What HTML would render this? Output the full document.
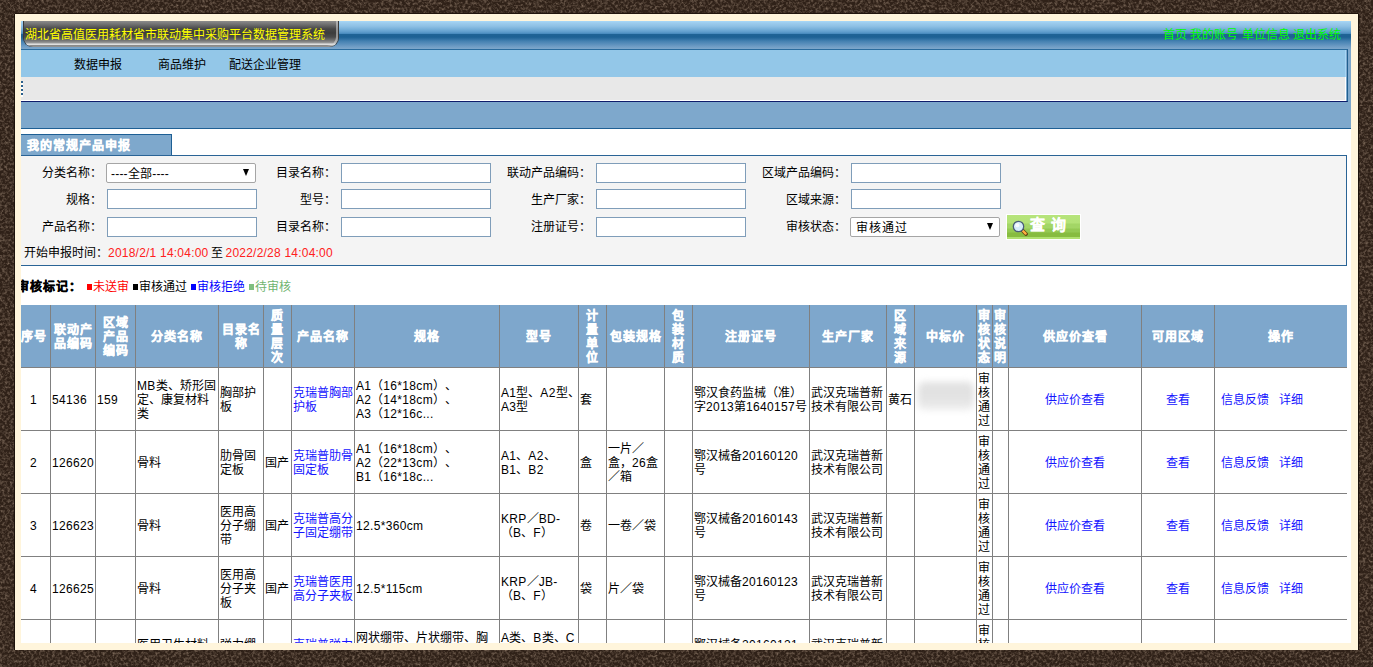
<!DOCTYPE html>
<html lang="zh-CN"><head><meta charset="utf-8">
<style>
*{box-sizing:border-box}
html,body{margin:0;padding:0}
body{text-spacing-trim:space-all;width:1373px;height:667px;overflow:hidden;position:relative;background:#3e3229;font-family:"Liberation Sans",sans-serif;font-size:12px;color:#000}
.abs{position:absolute}
#tex{position:absolute;left:0;top:0}
#cream{position:absolute;left:15px;top:14px;width:1343px;height:636px;background:#fff5dc;box-shadow:1px 0 0 #1c120b,-1px 0 0 #1c120b,0 -1px 0 #21150d}
#main{position:absolute;left:21px;top:21px;width:1330px;height:622px;background:#fff;overflow:hidden}
#hdr{position:absolute;left:0;top:0;width:1330px;height:28px;background:linear-gradient(to bottom,#a8d8f8 0px,#9ccced 2px,#8fc1e5 5px,#78b1da 8px,#5f9dcc 11px,#4a8cbf 12.5px,#1f6395 13.5px,#1d6194 16px,#2e6fa1 18px,#4380b0 20px,#5a8fbc 23px,#739fc6 26px,#7da7cb 28px)}
#tab{position:absolute;left:3px;top:0;width:314px;height:26px;border-radius:0 0 9px 9px;
background:linear-gradient(to bottom,#8c8c8c 0px,#6a6a6a 4px,#464646 8px,#3c3c3c 12px,#4a4a4a 16px,#7a7a7a 20px,#9a9a9a 22px,#e6e6e6 23px,#d8d8d8 24px,#3a3a3a 25px);
box-shadow:-1px 0 0 #3a3a3a,1px 0 0 #3a3a3a,inset -2px -1px 0 rgba(215,215,215,.55)}
#title{position:absolute;left:1px;top:7px;color:#ffff00;white-space:nowrap;line-height:14px}
#links{position:absolute;left:1142px;top:7px;color:#00ff00;white-space:nowrap;line-height:14px}
#mid{position:absolute;left:0;top:28px;width:1330px;height:80px;background:#7ea8cc;border-bottom:1px solid #1e5f94}
#menu{position:absolute;left:-4px;top:28px;width:1331px;height:53px;border-top:1px solid #2b6c9e;border-right:1px solid #1f5f8f;border-bottom:1px solid #0f1d6b}
#menu .lb{position:absolute;left:0;top:0;width:1329px;height:27px;background:#93c7e8;border-right:1px solid #a6d6f6}
#menu .gr{position:absolute;left:0;top:27px;width:1329px;height:24px;background:#e8e8e8;border-right:1px solid #fff;border-bottom:1px solid #fff}
.mi{position:absolute;top:8px;line-height:14px;white-space:nowrap}
#body{position:absolute;left:-4px;top:108px;width:1330px;height:520px}
#ftab{position:absolute;left:0;top:5px;width:155px;height:22px;background:#7ea8cc;border:1px solid #1e5f94;border-bottom:none;color:#fff;font-weight:bold;letter-spacing:1px;line-height:14px;padding:4px 0 0 9px}
#form{position:absolute;left:0;top:26px;width:1330px;height:111px;background:#f4f4f4;border:1px solid #2a6496}
.lbl{position:absolute;line-height:14px;white-space:nowrap;text-align:right}
.inp{position:absolute;width:150px;height:20px;background:#fff;border:1px solid #7f9db9}
.sel{position:absolute;width:150px;height:20px;background:#fff;border:1px solid #a5a5a5;border-radius:2px;line-height:14px;padding:2px 0 0 4px}
.sel .arr{position:absolute;right:6px;top:5px;width:0;height:0;border-left:3.5px solid transparent;border-right:3.5px solid transparent;border-top:7px solid #000}
#btn{position:absolute;left:988px;top:58px;width:75px;height:26px;border:1px solid #fff;background:linear-gradient(to bottom,#b6e47b 0,#b3e277 8px,#a3d666 9px,#a3d666 13px,#94c953 14px,#94c953 17px,#87bc40 18px,#87bc40 22px,#b0e070 22px)}
#btn .bt{position:absolute;left:23px;top:2px;-webkit-text-stroke:.2px #fff;color:#fff;font-weight:bold;font-size:15px;line-height:16px;letter-spacing:1px;white-space:nowrap}
#mark{position:absolute;left:0;top:151px;line-height:14px;white-space:nowrap}
#mark b{letter-spacing:1px}
.sq{display:inline-block;width:5px;height:6px;margin-right:1px;vertical-align:1px}
#tbl{position:absolute;left:0;top:176px;width:1330px;table-layout:fixed;border-collapse:separate;border-spacing:0}
#tbl th,#tbl td{border-right:1px solid #808080;border-bottom:1px solid #808080;padding:2px 0 0 1px;line-height:14px;vertical-align:middle;white-space:nowrap;overflow:hidden}
#tbl th{background:#7ea7cc;color:#fff;font-weight:bold;letter-spacing:1px;height:63px;text-align:center;padding:2px 0 0 0}
#tbl td{height:63px;text-align:left}
#tbl td.c{text-align:center;padding:2px 0 0 0}
#tbl td.op{padding-left:6px}
#tbl th:last-child,#tbl td:last-child{border-right:none}
#tbl a{color:#1414ff;text-decoration:none}
.blur{width:56px;height:28px;margin:-8px 0 0 2px;background:linear-gradient(to bottom,#e0e0e0 0,#e3e3e3 60%,#eeeeee 100%);filter:blur(3.5px);border-radius:6px}
.n{letter-spacing:.33px}
#ftab,#tbl th,#mark b{-webkit-text-stroke:.35px currentColor}
</style></head><body>
<svg id="tex" width="1373" height="667">
<filter id="nz" x="0" y="0" width="100%" height="100%"><feTurbulence type="fractalNoise" baseFrequency="0.38" numOctaves="3" seed="7"/><feColorMatrix type="matrix" values="0 0 0 0 0.46  0 0 0 0 0.34  0 0 0 0 0.25  1.15 0 0 0 -0.47"/></filter>
<rect width="1373" height="667" fill="#2f2118"/>
<rect width="1373" height="667" filter="url(#nz)"/>
</svg>
<div id="cream"></div>
<div id="main">
  <div id="hdr"></div>
  <div id="mid"></div>
  <div id="tab"><div id="title">湖北省高值医用耗材省市联动集中采购平台数据管理系统</div></div>
  <div id="links">首页 我的账号 单位信息 退出系统</div>
  <div id="menu"><div class="lb"><span class="mi" style="left:57px">数据申报</span><span class="mi" style="left:141px">商品维护</span><span class="mi" style="left:212px">配送企业管理</span></div><div class="gr"><div style="position:absolute;left:4px;top:4px;width:2px;height:16px;background:repeating-linear-gradient(to bottom,#2a5f8c 0,#2a5f8c 2px,#fff 2px,#fff 4px)"></div></div></div>
  <div id="body">
    <div id="ftab">我的常规产品申报</div>
    <div id="form">
  <div class="lbl" style="left:-16px;top:10px;width:100px">分类名称：</div>
  <div class="sel" style="left:88px;top:7px;padding-top:3px;letter-spacing:.2px">----全部----<span class="arr"></span></div>
  <div class="lbl" style="left:218px;top:10px;width:100px">目录名称：</div>
  <div class="inp" style="left:323px;top:7px"></div>
  <div class="lbl" style="left:473px;top:10px;width:100px">联动产品编码：</div>
  <div class="inp" style="left:578px;top:7px"></div>
  <div class="lbl" style="left:728px;top:10px;width:100px">区域产品编码：</div>
  <div class="inp" style="left:833px;top:7px"></div>

  <div class="lbl" style="left:-16px;top:37px;width:100px">规格：</div>
  <div class="inp" style="left:89px;top:33px"></div>
  <div class="lbl" style="left:218px;top:37px;width:100px">型号：</div>
  <div class="inp" style="left:323px;top:33px"></div>
  <div class="lbl" style="left:473px;top:37px;width:100px">生产厂家：</div>
  <div class="inp" style="left:578px;top:33px"></div>
  <div class="lbl" style="left:728px;top:37px;width:100px">区域来源：</div>
  <div class="inp" style="left:833px;top:33px"></div>

  <div class="lbl" style="left:-16px;top:64px;width:100px">产品名称：</div>
  <div class="inp" style="left:89px;top:61px"></div>
  <div class="lbl" style="left:218px;top:64px;width:100px">目录名称：</div>
  <div class="inp" style="left:323px;top:61px"></div>
  <div class="lbl" style="left:473px;top:64px;width:100px">注册证号：</div>
  <div class="inp" style="left:578px;top:61px"></div>
  <div class="lbl" style="left:728px;top:64px;width:100px">审核状态：</div>
  <div class="sel" style="left:832px;top:61px;padding-left:5px;padding-top:3px;letter-spacing:1px">审核通过<span class="arr"></span></div>
  <div id="btn"><svg width="18" height="18" style="position:absolute;left:5px;top:5px" viewBox="0 0 18 18"><line x1="10.5" y1="10.5" x2="14" y2="14" stroke="#5a3a10" stroke-width="3.8" stroke-linecap="round"/><line x1="11" y1="11" x2="13.6" y2="13.6" stroke="#ffb040" stroke-width="2.4" stroke-linecap="round"/><circle cx="6.5" cy="6.5" r="5.2" fill="#d5ecfa" stroke="#4b5f78" stroke-width="1.3"/><circle cx="5.3" cy="5.3" r="2" fill="#fff" opacity=".8"/></svg><span class="bt">查 询</span></div>

  <div class="lbl" style="left:6px;top:90px">开始申报时间：<span style="color:#ff2020;letter-spacing:.22px">2018/2/1 14:04:00</span><span style="margin:0 3px 0 2px">至</span><span style="color:#ff2020;letter-spacing:.22px">2022/2/28 14:04:00</span></div>
</div>
<table id="tbl"><colgroup><col style="width:34px"><col style="width:45px"><col style="width:40px"><col style="width:83px"><col style="width:45px"><col style="width:28px"><col style="width:63px"><col style="width:145px"><col style="width:79px"><col style="width:28px"><col style="width:58px"><col style="width:28px"><col style="width:117px"><col style="width:77px"><col style="width:28px"><col style="width:62px"><col style="width:16px"><col style="width:16px"><col style="width:133px"><col style="width:73px"><col style="width:132px"></colgroup>
<tr class="hd"><th>序号</th><th>联动产<br>品编码</th><th>区域<br>产品<br>编码</th><th>分类名称</th><th>目录名<br>称</th><th>质<br>量<br>层<br>次</th><th>产品名称</th><th>规格</th><th>型号</th><th>计<br>量<br>单<br>位</th><th>包装规格</th><th>包<br>装<br>材<br>质</th><th>注册证号</th><th>生产厂家</th><th>区<br>域<br>来<br>源</th><th>中标价</th><th>审<br>核<br>状<br>态</th><th>审<br>核<br>说<br>明</th><th>供应价查看</th><th>可用区域</th><th>操作</th></tr>
<tr><td class="c"><span class="n">1</span></td><td><span class="n">54136</span></td><td><span class="n">159</span></td><td><span class="n">MB</span>类、矫形固<br>定、康复材料<br>类</td><td>胸部护<br>板</td><td></td><td><a>克瑞普胸部<br>护板</a></td><td><span class="n">A1</span>（<span class="n">16*18cm</span>）、<br><span class="n">A2</span>（<span class="n">14*18cm</span>）、<br><span class="n">A3</span>（<span class="n">12*16c...</span></td><td><span class="n">A1</span>型、<span class="n">A2</span>型、<br><span class="n">A3</span>型</td><td>套</td><td></td><td></td><td>鄂汉食药监械（准）<br>字<span class="n">2013</span>第<span class="n">1640157</span>号</td><td>武汉克瑞普新<br>技术有限公司</td><td>黄石</td><td><div class="blur"></div></td><td>审<br>核<br>通<br>过</td><td></td><td class="c"><a>供应价查看</a></td><td class="c"><a>查看</a></td><td class="op"><a>信息反馈</a>&nbsp;&nbsp;&nbsp;<a>详细</a></td></tr>
<tr><td class="c"><span class="n">2</span></td><td><span class="n">126620</span></td><td></td><td>骨料</td><td>肋骨固<br>定板</td><td>国产</td><td><a>克瑞普肋骨<br>固定板</a></td><td><span class="n">A1</span>（<span class="n">16*18cm</span>）、<br><span class="n">A2</span>（<span class="n">22*13cm</span>）、<br><span class="n">B1</span>（<span class="n">16*18c...</span></td><td><span class="n">A1</span>、<span class="n">A2</span>、<br><span class="n">B1</span>、<span class="n">B2</span></td><td>盒</td><td>一片／<br>盒，<span class="n">26</span>盒<br>／箱</td><td></td><td>鄂汉械备<span class="n">20160120</span><br>号</td><td>武汉克瑞普新<br>技术有限公司</td><td></td><td></td><td>审<br>核<br>通<br>过</td><td></td><td class="c"><a>供应价查看</a></td><td class="c"><a>查看</a></td><td class="op"><a>信息反馈</a>&nbsp;&nbsp;&nbsp;<a>详细</a></td></tr>
<tr><td class="c"><span class="n">3</span></td><td><span class="n">126623</span></td><td></td><td>骨料</td><td>医用高<br>分子绷<br>带</td><td>国产</td><td><a>克瑞普高分<br>子固定绷带</a></td><td><span class="n">12.5*360cm</span></td><td><span class="n">KRP</span>／<span class="n">BD-</span><br>（<span class="n">B</span>、<span class="n">F</span>）</td><td>卷</td><td>一卷／袋</td><td></td><td>鄂汉械备<span class="n">20160143</span><br>号</td><td>武汉克瑞普新<br>技术有限公司</td><td></td><td></td><td>审<br>核<br>通<br>过</td><td></td><td class="c"><a>供应价查看</a></td><td class="c"><a>查看</a></td><td class="op"><a>信息反馈</a>&nbsp;&nbsp;&nbsp;<a>详细</a></td></tr>
<tr><td class="c"><span class="n">4</span></td><td><span class="n">126625</span></td><td></td><td>骨料</td><td>医用高<br>分子夹<br>板</td><td>国产</td><td><a>克瑞普医用<br>高分子夹板</a></td><td><span class="n">12.5*115cm</span></td><td><span class="n">KRP</span>／<span class="n">JB-</span><br>（<span class="n">B</span>、<span class="n">F</span>）</td><td>袋</td><td>片／袋</td><td></td><td>鄂汉械备<span class="n">20160123</span><br>号</td><td>武汉克瑞普新<br>技术有限公司</td><td></td><td></td><td>审<br>核<br>通<br>过</td><td></td><td class="c"><a>供应价查看</a></td><td class="c"><a>查看</a></td><td class="op"><a>信息反馈</a>&nbsp;&nbsp;&nbsp;<a>详细</a></td></tr>
<tr><td class="c"><span class="n">5</span></td><td><span class="n">126627</span></td><td></td><td>医用卫生材料<br>类</td><td>弹力绷<br>带</td><td></td><td><a>克瑞普弹力<br>绷带</a></td><td>网状绷带、片状绷带、胸<br>带、腹带、弹力绷带、<br>医用<span class="n">...</span></td><td><span class="n">A</span>类、<span class="n">B</span>类、<span class="n">C</span><br>类、<span class="n">D</span>类、<span class="n">E</span><br>类</td><td></td><td></td><td></td><td>鄂汉械备<span class="n">20160121</span><br>号</td><td>武汉克瑞普新<br>技术有限公司</td><td></td><td></td><td>审<br>核<br>通<br>过</td><td></td><td class="c"><a>供应价查看</a></td><td class="c"><a>查看</a></td><td class="op"><a>信息反馈</a>&nbsp;&nbsp;&nbsp;<a>详细</a></td></tr>
</table>
<div id="mark"><b>审核标记：</b><span class="sq" style="background:#ff0000;margin-left:5px"></span><span style="color:#ff0000">未送审</span><span class="sq" style="background:#000;margin-left:4px"></span><span>审核通过</span><span class="sq" style="background:#0000ff;margin-left:4px"></span><span style="color:#0000ff">审核拒绝</span><span class="sq" style="background:#7fbf7f;margin-left:4px"></span><span style="color:#6fb46f">待审核</span></div>
  </div>
</div>
</body></html>
